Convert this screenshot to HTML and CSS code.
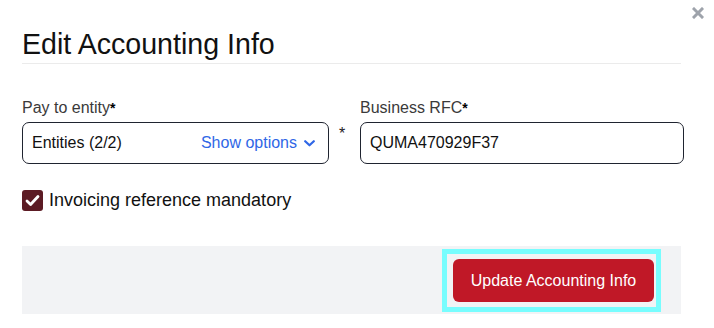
FILE: index.html
```html
<!DOCTYPE html>
<html lang="en">
<head>
<meta charset="utf-8">
<title>Edit Accounting Info</title>
<link rel="stylesheet" href="styles.css">
</head>
<body>
<div class="modal">
  <button class="close" aria-label="Close">
    <svg width="12" height="12" viewBox="0 0 12 12"><path d="M2 2 L10 10 M10 2 L2 10" stroke="#9ea3ab" stroke-width="3" stroke-linecap="square"/></svg>
  </button>
  <div class="header">
    <h1 class="title">Edit Accounting Info</h1>
  </div>
  <div class="fields">
    <div class="field field-entity">
      <label class="label">Pay to entity<span class="req">*</span></label>
      <div class="box select">
        <span class="value">Entities (2/2)</span>
        <span class="show">Show options
          <svg class="chev" width="11" height="7" viewBox="0 0 11 7"><path d="M1.2 1.2 L5.5 5.3 L9.8 1.2" fill="none" stroke="#2f67e6" stroke-width="2.2" stroke-linecap="round" stroke-linejoin="round"/></svg>
        </span>
      </div>
    </div>
    <div class="gap-req">*</div>
    <div class="field field-rfc">
      <label class="label">Business RFC<span class="req">*</span></label>
      <div class="box input"><span class="value">QUMA470929F37</span></div>
    </div>
  </div>
  <div class="check-row">
    <span class="checkbox">
      <svg width="15" height="13" viewBox="0 0 15 13"><path d="M2 7 L5.6 10.5 L13 2.5" fill="none" stroke="#fff" stroke-width="2.8" stroke-linecap="round" stroke-linejoin="round"/></svg>
    </span>
    <span class="check-label">Invoicing reference mandatory</span>
  </div>
  <div class="footer">
    <div class="focus-ring">
      <button class="primary">Update Accounting Info</button>
    </div>
  </div>
</div>
</body>
</html>
```
FILE: styles.css
```css
* { box-sizing: border-box; }
html, body { margin: 0; padding: 0; background: #fff; }
body {
  font-family: "Liberation Sans", Arial, sans-serif;
  color: #111;
  width: 714px;
  height: 328px;
  overflow: hidden;
}
.modal {
  position: relative;
  padding: 28px 33px 0 22px;
}
.close {
  position: absolute;
  top: 7px;
  right: 10px;
  width: 12px;
  height: 12px;
  padding: 0;
  border: 0;
  background: none;
  display: block;
}
.close svg { display: block; }
.header {
  padding-bottom: 3px;
  border-bottom: 1px solid #ebebeb;
}
.title {
  margin: 0;
  font-size: 28.6px;
  line-height: 32px;
  font-weight: normal;
  color: #111;
}
.fields {
  display: flex;
  align-items: flex-start;
  margin-top: 35px;
  margin-right: -3px;
}
.field { display: flex; flex-direction: column; }
.field-entity { width: 307px; }
.field-rfc { flex: 1; }
.label {
  font-size: 16px;
  line-height: 18px;
  color: #3a3a3a;
  margin-bottom: 5px;
}
.req { color: #000; font-weight: bold; font-size: 14px; }
.gap-req {
  width: 31px;
  padding-left: 10px;
  padding-top: 26px;
  font-size: 16px;
  line-height: 18px;
  color: #222;
}
.box {
  height: 42px;
  border: 1px solid #1f2430;
  border-radius: 7px;
  display: flex;
  align-items: center;
  padding: 0 13px 0 9px;
  font-size: 16px;
}
.select { justify-content: space-between; }
.value { color: #111; }
.show {
  color: #2f67e6;
  display: flex;
  align-items: center;
}
.chev { margin-left: 7px; margin-top: 1px; }
.check-row {
  display: flex;
  align-items: center;
  margin-top: 26px;
  height: 21px;
}
.checkbox {
  width: 21px;
  height: 21px;
  border-radius: 3px;
  background: #5c1b24;
  display: flex;
  align-items: center;
  justify-content: center;
}
.checkbox svg { display: block; }
.check-label {
  margin-left: 6px;
  font-size: 18px;
  line-height: 21px;
  color: #111;
}
.footer {
  margin-top: 35px;
  height: 68px;
  background: #f2f3f5;
  display: flex;
  justify-content: flex-end;
  align-items: flex-start;
  padding: 3px 20px 2px 0;
}
.focus-ring {
  border: 5px solid #78fdfe;
  padding: 5px 2px 5px 6px;
}
.primary {
  display: block;
  width: 201px;
  height: 43px;
  border: 0;
  border-radius: 6px;
  background: #c01827;
  color: #fff;
  font-family: "Liberation Sans", Arial, sans-serif;
  font-size: 16px;
  padding: 0;
}
```
